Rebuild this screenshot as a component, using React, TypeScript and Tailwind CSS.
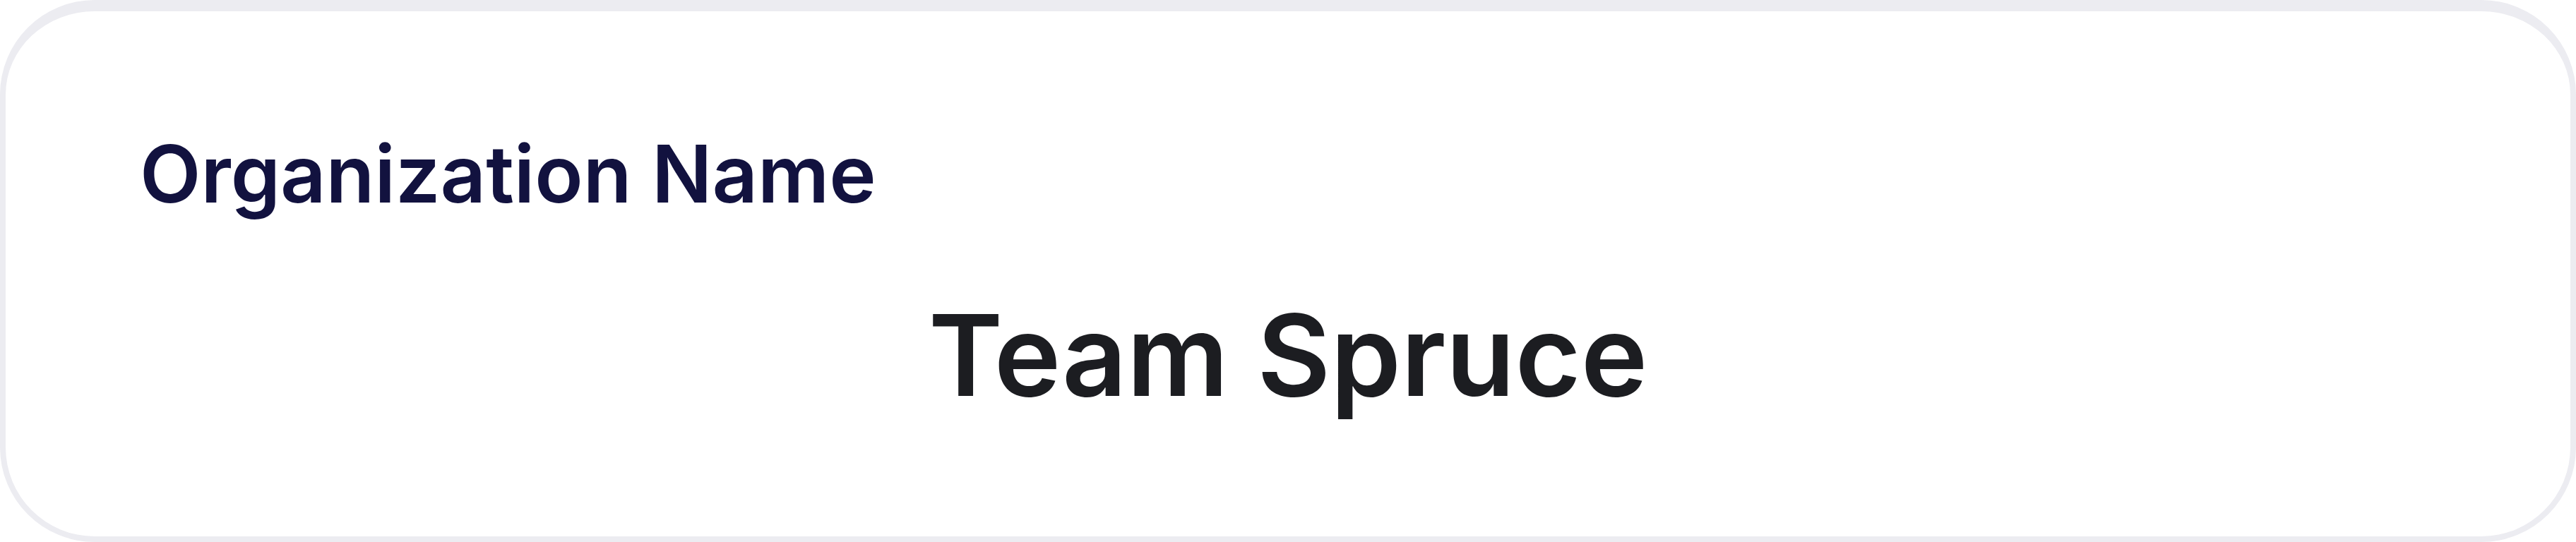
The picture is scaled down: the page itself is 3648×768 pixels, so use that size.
export default function App() {
  return (
    <div className="w-[3648px] h-[768px] bg-white" style={{ fontFamily: "Inter, 'Noto Sans', sans-serif" }}>
      <div className="box-border w-full h-full rounded-[134px] border-x-8 border-b-8 border-t-[16px] border-[#ececf1] bg-white flex flex-col pt-[174px] pl-[190px] pr-[190px]">
        <h2 className="text-[112.5px] leading-none font-semibold text-[#12123f]">Organization Name</h2>
        <p className="mt-[120px] text-center text-[160px] leading-none font-semibold text-[#1c1d21]">Team Spruce</p>
      </div>
    </div>
  );
}
